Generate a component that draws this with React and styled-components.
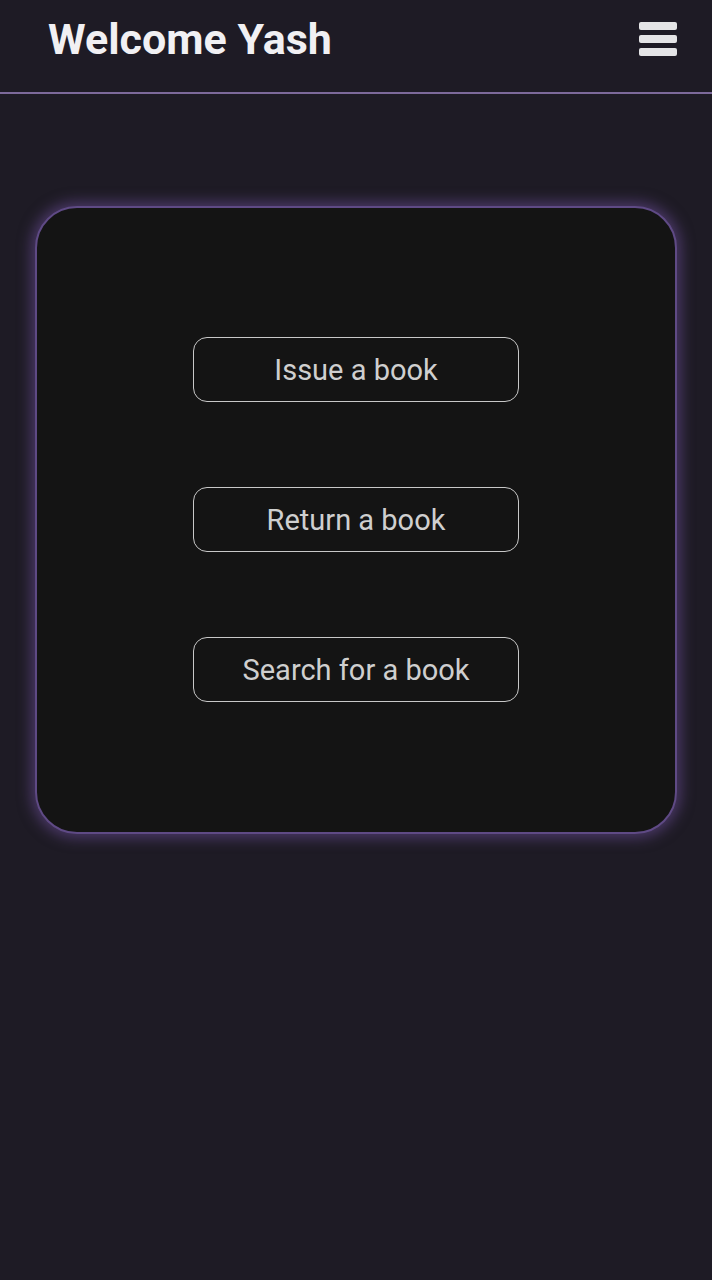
import React from 'react';
import styled, { createGlobalStyle } from 'styled-components';

const GlobalStyle = createGlobalStyle`
	html, body {
		margin: 0;
		padding: 0;
		background: #1e1b25;
		font-family: Roboto, 'Liberation Sans', sans-serif;
	}
`;

const Page = styled.div`
	min-height: 1280px;
	background: #1e1b25;
`;

const Header = styled.header`
	display: flex;
	align-items: center;
	justify-content: space-between;
	height: 94px;
	padding: 0 35px 14px 48px;
	box-sizing: border-box;
	border-bottom: 2px solid #7d6a9b;
`;

const Title = styled.h1`
	margin: 0;
	font-size: 43px;
	font-weight: 700;
	color: #f1f0f3;
	letter-spacing: 0;
`;

const MenuButton = styled.button`
	display: flex;
	padding: 0;
	border: none;
	background: none;
	cursor: pointer;
`;

const Main = styled.main`
	padding: 112px 35px 0 35px;
`;

const Card = styled.section`
	display: flex;
	flex-direction: column;
	align-items: center;
	gap: 85px;
	padding: 129px 0 130px;
	background: #141414;
	border: 2px solid #5f4a85;
	border-radius: 42px;
	box-shadow: 0 0 14px 4px rgba(120, 85, 170, 0.5);
`;

const ActionButton = styled.button`
	width: 326px;
	height: 65px;
	border: 1px solid #c8c8c8;
	border-radius: 14px;
	background: transparent;
	color: #cfcfcf;
	font-family: Roboto, 'Liberation Sans', sans-serif;
	font-size: 29px;
	cursor: pointer;
`;

const BarsIcon = () => (
	<svg width="38" height="34" viewBox="0 0 38 34">
		<rect x="0" y="0" width="38" height="8" rx="2" fill="#e4e4e6" />
		<rect x="0" y="13" width="38" height="8" rx="2" fill="#e4e4e6" />
		<rect x="0" y="26" width="38" height="8" rx="2" fill="#e4e4e6" />
	</svg>
);

const actions = ['Issue a book', 'Return a book', 'Search for a book'];

export default function App() {
	return (
		<Page>
			<GlobalStyle />
			<Header>
				<Title>Welcome Yash</Title>
				<MenuButton aria-label="menu">
					<BarsIcon />
				</MenuButton>
			</Header>
			<Main>
				<Card>
					{actions.map((label) => (
						<ActionButton key={label}>{label}</ActionButton>
					))}
				</Card>
			</Main>
		</Page>
	);
}
